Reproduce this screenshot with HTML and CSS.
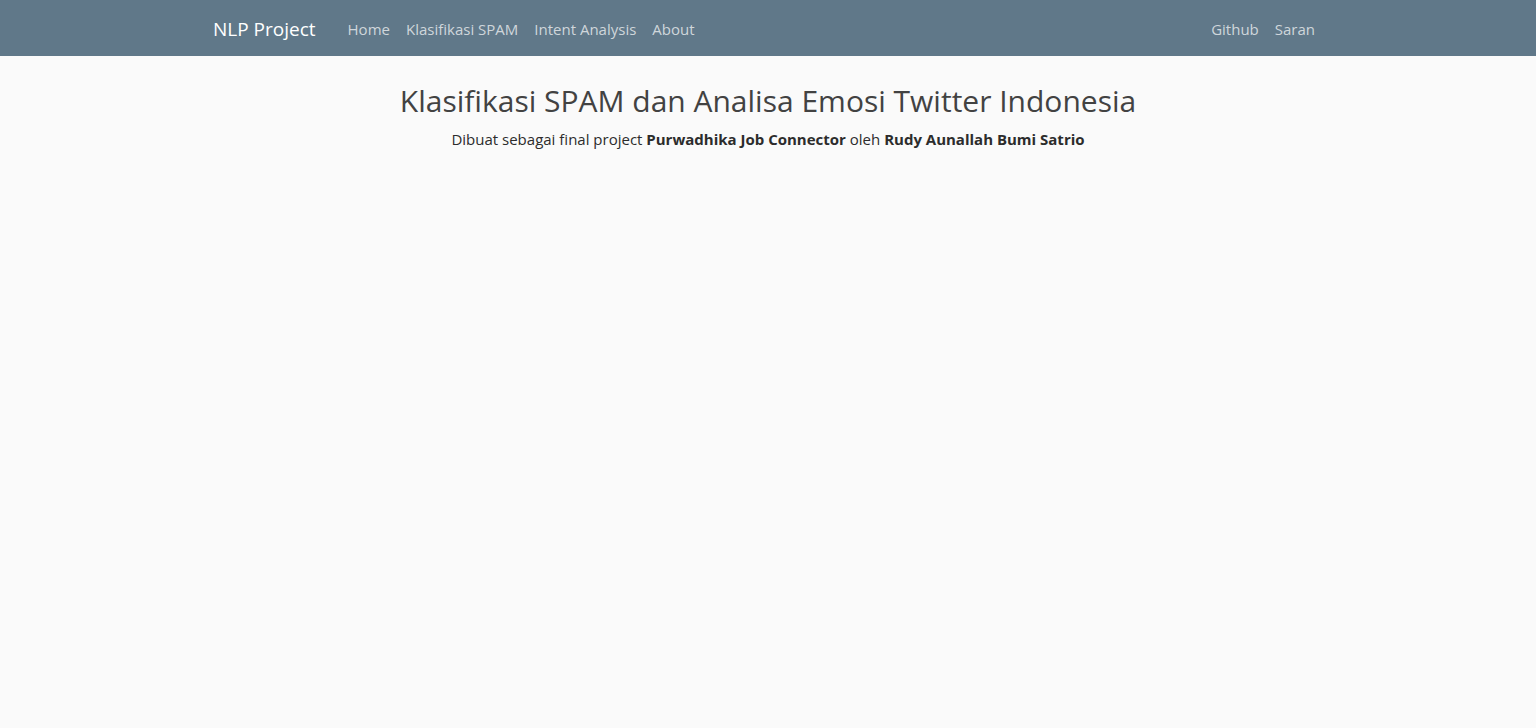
FILE: index.html
```html
<!DOCTYPE html>
<html lang="id">
<head>
<meta charset="utf-8">
<meta name="viewport" content="width=device-width, initial-scale=1">
<title>NLP Project</title>
<link rel="stylesheet" href="styles.css">
</head>
<body>
<nav class="navbar">
  <div class="container navbar-inner">
    <a class="brand" href="#">NLP Project</a>
    <ul class="nav-list">
      <li><a class="nav-link" href="#">Home</a></li>
      <li><a class="nav-link" href="#">Klasifikasi SPAM</a></li>
      <li><a class="nav-link" href="#">Intent Analysis</a></li>
      <li><a class="nav-link" href="#">About</a></li>
    </ul>
    <ul class="nav-list nav-end">
      <li><a class="nav-link" href="#">Github</a></li>
      <li><a class="nav-link" href="#">Saran</a></li>
    </ul>
  </div>
</nav>
<main class="container intro">
  <h1 class="title">Klasifikasi SPAM dan Analisa Emosi Twitter Indonesia</h1>
  <p class="subtitle">Dibuat sebagai final project <strong>Purwadhika Job Connector</strong> oleh <strong>Rudy Aunallah Bumi Satrio</strong></p>
</main>
</body>
</html>
```
FILE: styles.css
```css
* {
  box-sizing: border-box;
}

body {
  margin: 0;
  background: #fafafa;
  color: #2c2c2c;
  font-family: "Segoe UI", "Open Sans", "Noto Sans", sans-serif;
  font-size: 15px;
  line-height: 24px;
}

.container {
  max-width: 1140px;
  margin: 0 auto;
  padding: 0 15px;
}

.navbar {
  padding: 9px 0 7px;
  background: #607889;
}

.navbar-inner {
  display: flex;
  flex-wrap: wrap;
  align-items: center;
}

.brand {
  margin-right: 24px;
  padding: 5px 0;
  color: #fff;
  font-size: 19px;
  line-height: 30px;
  text-decoration: none;
}

.nav-list {
  display: flex;
  margin: 0;
  padding: 0;
  list-style: none;
}

.nav-end {
  margin-left: auto;
}

.nav-link {
  display: block;
  padding: 8px;
  color: #cfd6db;
  text-decoration: none;
}

.intro {
  padding-top: 25px;
  text-align: center;
}

.title {
  margin: 0 0 6px;
  color: #424242;
  font-size: 30px;
  font-weight: 400;
  line-height: 40px;
}

.subtitle {
  margin: 0;
}
```
